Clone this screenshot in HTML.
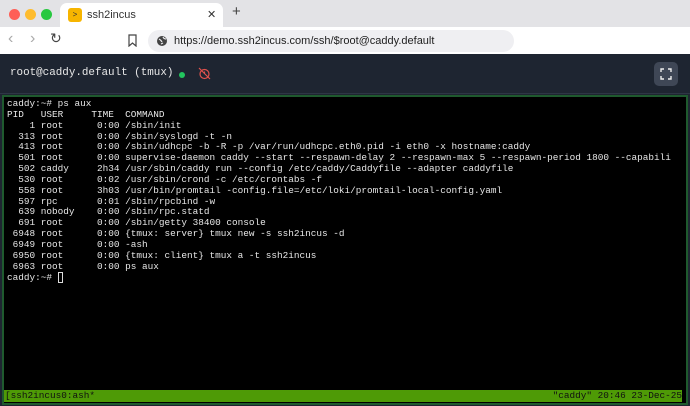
<!DOCTYPE html>
<html><head><style>
*{margin:0;padding:0;box-sizing:border-box}
body{width:690px;height:406px;overflow:hidden;background:#1e2531;font-family:"Liberation Sans",sans-serif;position:relative}
.tabbar{position:absolute;left:0;top:0;width:690px;height:27px;background:#e3e3e6}
.dot{position:absolute;top:9px;width:11px;height:11px;border-radius:50%}
.tab{position:absolute;left:60px;top:3px;width:163px;height:24px;background:#fff;border-radius:7px 7px 0 0}
.addr{position:absolute;left:0;top:27px;width:690px;height:27px;background:#fff}
.url{position:absolute;left:148px;top:3px;width:366px;height:22px;background:#efeff2;border-radius:11px;font-size:11px;color:#222;line-height:22px;padding-left:26px}
.hdr{position:absolute;left:0;top:54px;width:690px;height:40px;background:#1e2531;border-bottom:1px solid #2e3645}
.term{position:absolute;left:2px;top:95px;width:686px;height:310px;background:#000;border:2px solid #1f5a2e}
pre{position:absolute;left:3px;top:2px;font-family:"Liberation Mono","DejaVu Sans Mono",monospace;font-size:9.4px;line-height:10.85px;color:#e6e6e6}
.status{position:absolute;left:0;top:293px;width:678px;height:12px;background:#4e9a06;font-family:"Liberation Mono",monospace;font-size:9.4px;line-height:12px;color:#111;padding-left:1px}
</style></head><body>
<div class="tabbar">
<div class="dot" style="left:9px;background:#fe5f57"></div>
<div class="dot" style="left:25px;background:#febc2e"></div>
<div class="dot" style="left:41px;background:#28c840"></div>
<div class="tab">
<div style="position:absolute;left:8px;top:5px;width:14px;height:14px;background:#f7b500;border-radius:3px;font-size:8px;line-height:14px;text-align:center;color:#333">&gt;</div>
<div style="position:absolute;left:27px;top:0;font-size:11px;line-height:24px;color:#333">ssh2incus</div>
<div style="position:absolute;left:147px;top:0;font-size:11px;line-height:24px;color:#333">✕</div>
</div>
<div style="position:absolute;left:232px;top:3px;font-size:15px;color:#444">+</div>
</div>
<div class="addr">
<div style="position:absolute;left:8px;top:3px;font-size:16px;color:#aaa">‹</div>
<div style="position:absolute;left:30px;top:3px;font-size:16px;color:#aaa">›</div>
<div style="position:absolute;left:50px;top:3px;font-size:14px;color:#444">↻</div>
<svg style="position:absolute;left:128px;top:7px" width="9" height="13"><path d="M1 1h7v11l-3.5-3-3.5 3z" fill="none" stroke="#444" stroke-width="1.2"/></svg>
<div class="url"><svg style="position:absolute;left:8px;top:5px" width="12" height="12"><circle cx="6" cy="6" r="5" fill="#444"/><path d="M3 4q2 1 3 3M7 2q1 2 3 2M5 9l2-1" stroke="#efeff2" stroke-width="1.2" fill="none"/></svg>https://demo.ssh2incus.com/ssh/$root@caddy.default</div>
</div>
<div class="hdr">
<div style="position:absolute;left:10px;top:13px;font-family:'Liberation Mono',monospace;font-size:10.9px;color:#e8e8e8">root@caddy.default (tmux)</div>
<div style="position:absolute;left:179px;top:18px;width:6px;height:6px;border-radius:50%;background:#22c55e"></div>
<svg style="position:absolute;left:198px;top:13px" width="13" height="13"><circle cx="6.5" cy="7" r="4.5" fill="none" stroke="#e0524d" stroke-width="1.2"/><path d="M1 1l11 11M6.5 4.5v2.5" stroke="#e0524d" stroke-width="1.2"/></svg>
<div style="position:absolute;left:654px;top:8px;width:24px;height:24px;background:#3f4756;border-radius:5px"><svg width="24" height="24"><path d="M7 10V7h3M14 7h3v3M17 14v3h-3M10 17H7v-3" stroke="#eee" stroke-width="1.4" fill="none"/></svg></div>
</div>
<div class="term">
<pre>caddy:~# ps aux
PID   USER     TIME  COMMAND
    1 root      0:00 /sbin/init
  313 root      0:00 /sbin/syslogd -t -n
  413 root      0:00 /sbin/udhcpc -b -R -p /var/run/udhcpc.eth0.pid -i eth0 -x hostname:caddy
  501 root      0:00 supervise-daemon caddy --start --respawn-delay 2 --respawn-max 5 --respawn-period 1800 --capabili
  502 caddy     2h34 /usr/sbin/caddy run --config /etc/caddy/Caddyfile --adapter caddyfile
  530 root      0:02 /usr/sbin/crond -c /etc/crontabs -f
  558 root      3h03 /usr/bin/promtail -config.file=/etc/loki/promtail-local-config.yaml
  597 rpc       0:01 /sbin/rpcbind -w
  639 nobody    0:00 /sbin/rpc.statd
  691 root      0:00 /sbin/getty 38400 console
 6948 root      0:00 {tmux: server} tmux new -s ssh2incus -d
 6949 root      0:00 -ash
 6950 root      0:00 {tmux: client} tmux a -t ssh2incus
 6963 root      0:00 ps aux
caddy:~# <span style="outline:1px solid #ddd;outline-offset:-1px">&nbsp;</span></pre>
<div class="status"><span>[ssh2incus0:ash*</span><span style="position:absolute;right:0">"caddy" 20:46 23-Dec-25</span></div>
</div>
</body></html>
